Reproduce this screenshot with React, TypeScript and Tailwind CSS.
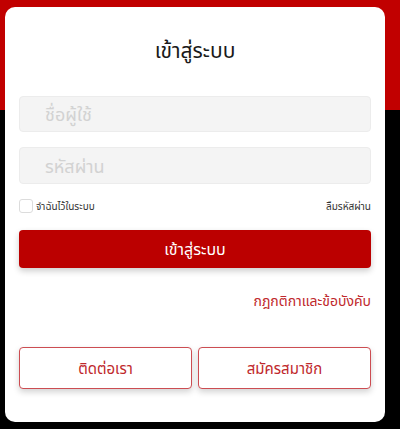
import React from 'react';

export default function App() {
  return (
    <div
      className="relative w-[400px] h-[429px] overflow-hidden bg-black"
      style={{ fontFamily: '"Noto Sans", "Noto Sans Thai", sans-serif' }}
    >
      {/* red header band behind card */}
      <div className="absolute left-0 top-0 w-full h-[110px] bg-[#c10000]" />

      <div className="relative mt-[7px] ml-[5px] w-[380px] h-[415px] bg-white rounded-[10px] px-[14px] flex flex-col">
        <h1 className="text-center text-[21px] text-[#1a1a1a] mt-[26px] leading-[34px]">เข้าสู่ระบบ</h1>

        <input
          placeholder="ชื่อผู้ใช้"
          className="mt-[29px] h-[36px] w-full rounded-[4px] border border-[#ececec] bg-[#f4f4f4] pl-[25px] text-[18px] placeholder:text-[#d2d2d2] outline-none"
        />
        <input
          placeholder="รหัสผ่าน"
          type="text"
          className="mt-[15px] h-[37px] w-full rounded-[4px] border border-[#ececec] bg-[#f4f4f4] pl-[25px] text-[18px] placeholder:text-[#d2d2d2] outline-none"
        />

        <div className="mt-[14px] flex items-center justify-between h-[16px]">
          <label className="flex items-center gap-[3px] text-[10px] text-[#333]">
            <span className="w-[14px] h-[14px] rounded-[3px] border border-[#dcdcdc] bg-white" />
            จำฉันไว้ในระบบ
          </label>
          <span className="text-[10px] text-[#333]">ลืมรหัสผ่าน</span>
        </div>

        <button className="mt-[16px] h-[38px] w-full rounded-[4px] bg-[#bb0000] text-white text-[16px] shadow-[0_3px_6px_rgba(0,0,0,0.2)]">
          เข้าสู่ระบบ
        </button>

        <div className="mt-[22px] text-right text-[14px] text-[#c0282c]">กฎกติกาและข้อบังคับ</div>

        <div className="mt-[36px] grid grid-cols-2 gap-[6px]">
          <button className="h-[42px] rounded-[4px] border-[1.5px] border-[#cc4d52] bg-white text-[15px] text-[#c0282c] shadow-[0_3px_6px_rgba(0,0,0,0.18)]">
            ติดต่อเรา
          </button>
          <button className="h-[42px] rounded-[4px] border-[1.5px] border-[#cc4d52] bg-white text-[15px] text-[#c0282c] shadow-[0_3px_6px_rgba(0,0,0,0.18)]">
            สมัครสมาชิก
          </button>
        </div>
      </div>
    </div>
  );
}
